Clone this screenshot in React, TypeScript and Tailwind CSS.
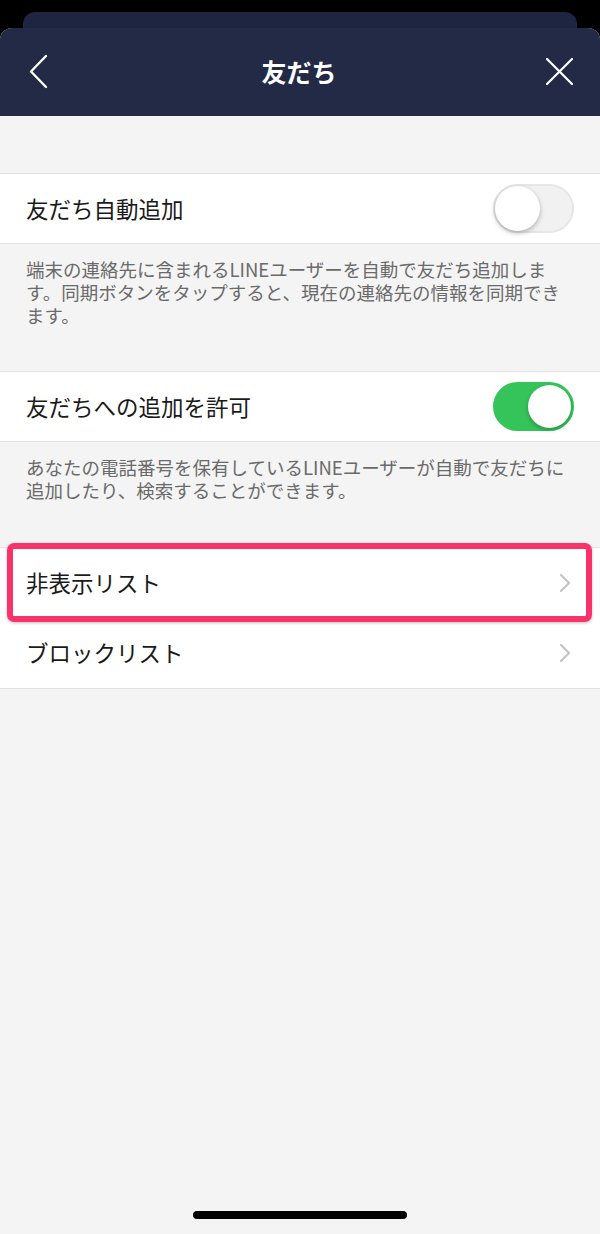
import React from "react";

function Toggle({ on }: { on: boolean }) {
  return on ? (
    <div className="relative h-[49px] w-[81px] rounded-full bg-[#34c45a]">
      <div className="absolute right-[3px] top-[3px] h-[43px] w-[43px] rounded-full bg-white shadow-[0_2px_4px_rgba(0,0,0,0.25)]" />
    </div>
  ) : (
    <div className="relative h-[49px] w-[81px] rounded-full border-2 border-[#e6e6e6] bg-[#f1f1f1]">
      <div className="absolute left-[0px] top-[0px] h-[45px] w-[45px] rounded-full bg-white shadow-[0_2px_5px_rgba(0,0,0,0.28)]" />
    </div>
  );
}

function Chevron() {
  return (
    <svg width="14" height="22" viewBox="0 0 14 22" fill="none">
      <path d="M3 3 L11 11 L3 19" stroke="#c4c4c4" strokeWidth="2.2" strokeLinecap="round" strokeLinejoin="round" />
    </svg>
  );
}

export default function App() {
  return (
    <div
      className="flex h-[1234px] w-[600px] flex-col overflow-hidden bg-black"
      style={{ fontFamily: '"Noto Sans CJK JP", "Noto Sans", sans-serif' }}
    >
      <div className="h-[12px] shrink-0" />
      <div className="mx-[23px] h-[16px] shrink-0 rounded-t-[12px] bg-[#1d2541]" />
      <div className="flex flex-1 flex-col overflow-hidden rounded-t-[12px] bg-[#f4f4f4]">
        <div className="flex h-[88px] shrink-0 items-center justify-between bg-[#222a45] px-[24px]">
          <svg width="30" height="36" viewBox="0 0 30 36" fill="none">
            <path d="M22 2 L7 17.5 L22 33" stroke="white" strokeWidth="2.4" strokeLinecap="round" strokeLinejoin="round" />
          </svg>
          <div className="text-[25px] font-bold text-white">友だち</div>
          <svg width="32" height="32" viewBox="0 0 32 32" fill="none">
            <path d="M3 3 L28 28 M28 3 L3 28" stroke="white" strokeWidth="2.2" strokeLinecap="round" />
          </svg>
        </div>

        <div className="h-[57px] shrink-0" />

        <div className="flex h-[71px] shrink-0 items-center justify-between border-y border-[#e2e2e2] bg-white pl-[26px] pr-[26px]">
          <span className="text-[22.5px] text-[#1a1a1a]">友だち自動追加</span>
          <Toggle on={false} />
        </div>
        <div className="h-[127px] shrink-0 px-[26px] pt-[14px] text-[18.5px] leading-[23px] text-[#6a6a6a]">
          端末の連絡先に含まれるLINEユーザーを自動で友だち追加します。同期ボタンをタップすると、現在の連絡先の情報を同期できます。
        </div>

        <div className="flex h-[71px] shrink-0 items-center justify-between border-y border-[#e2e2e2] bg-white pl-[26px] pr-[26px]">
          <span className="text-[22.5px] text-[#1a1a1a]">友だちへの追加を許可</span>
          <Toggle on={true} />
        </div>
        <div className="h-[105px] shrink-0 px-[26px] pt-[14px] text-[18.5px] leading-[23px] text-[#6a6a6a]">
          あなたの電話番号を保有しているLINEユーザーが自動で友だちに追加したり、検索することができます。
        </div>

        <div className="relative shrink-0">
          <div className="flex h-[71px] items-center justify-between border-t border-[#e2e2e2] bg-white pl-[26px] pr-[28px]">
            <span className="text-[22.5px] text-[#1a1a1a]">非表示リスト</span>
            <Chevron />
          </div>
          <div className="absolute left-[7px] right-[8px] top-[-4px] h-[79px] rounded-[7px] border-[6px] border-[#f8336c] shadow-[0_1px_3px_rgba(0,0,0,0.25)]" />
        </div>
        <div className="flex h-[71px] shrink-0 items-center justify-between border-b border-[#e2e2e2] bg-white pl-[26px] pr-[28px]">
          <span className="text-[22.5px] text-[#1a1a1a]">ブロックリスト</span>
          <Chevron />
        </div>

        <div className="flex-1" />
        <div className="flex h-[23px] shrink-0 justify-center">
          <div className="h-[8px] w-[214px] rounded-full bg-black" />
        </div>
      </div>
    </div>
  );
}
